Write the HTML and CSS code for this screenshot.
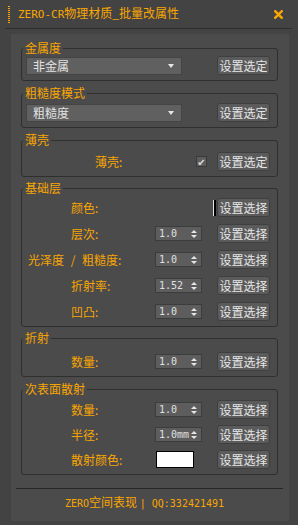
FILE: index.html
```html
<!DOCTYPE html>
<html lang="zh-CN">
<head>
    <meta charset="UTF-8">
    <meta name="viewport" content="width=device-width, initial-scale=1.0">
    <title>ZERO-CR物理材质_批量改属性</title>
    <link rel="stylesheet" href="styles.css">
</head>
<body>
    <div class="titlebar">
        <span class="grip"></span>
        <span class="title"><span class="latin">ZERO-CR</span>物理材质_批量改属性</span>
        <svg class="close" width="9" height="9" viewBox="0 0 9 9">
            <path d="M1.2 1.2 L7.8 7.8 M7.8 1.2 L1.2 7.8" stroke="#f9a602" stroke-width="2.4" stroke-linecap="square"/>
        </svg>
    </div>

    <div class="panel">
        <fieldset class="group g-metal">
            <legend>金属度</legend>
            <div class="select-row">
                <div class="dropdown">非金属<span class="caret"></span></div>
                <button class="btn">设置选定</button>
            </div>
        </fieldset>

        <fieldset class="group g-rough">
            <legend>粗糙度模式</legend>
            <div class="select-row">
                <div class="dropdown">粗糙度<span class="caret"></span></div>
                <button class="btn">设置选定</button>
            </div>
        </fieldset>

        <fieldset class="group g-thin">
            <legend>薄壳</legend>
            <div class="row">
                <span class="label label-thin">薄壳:</span>
                <span class="checkbox">✔</span>
                <button class="btn">设置选定</button>
            </div>
        </fieldset>

        <fieldset class="group g-base">
            <legend>基础层</legend>
            <div class="row row-first">
                <span class="label">颜色:</span>
                <span class="swatch-thin"></span>
                <button class="btn">设置选择</button>
            </div>
            <div class="row">
                <span class="label">层次:</span>
                <span class="spinner">1.0<span class="arrows"></span></span>
                <button class="btn">设置选择</button>
            </div>
            <div class="row">
                <span class="label label-long">光泽度 / 粗糙度:</span>
                <span class="spinner">1.0<span class="arrows"></span></span>
                <button class="btn">设置选择</button>
            </div>
            <div class="row">
                <span class="label">折射率:</span>
                <span class="spinner">1.52<span class="arrows"></span></span>
                <button class="btn">设置选择</button>
            </div>
            <div class="row">
                <span class="label">凹凸:</span>
                <span class="spinner">1.0<span class="arrows"></span></span>
                <button class="btn">设置选择</button>
            </div>
        </fieldset>

        <fieldset class="group g-refr">
            <legend>折射</legend>
            <div class="row">
                <span class="label">数量:</span>
                <span class="spinner">1.0<span class="arrows"></span></span>
                <button class="btn">设置选择</button>
            </div>
        </fieldset>

        <fieldset class="group g-sss">
            <legend>次表面散射</legend>
            <div class="row">
                <span class="label">数量:</span>
                <span class="spinner">1.0<span class="arrows"></span></span>
                <button class="btn">设置选择</button>
            </div>
            <div class="row">
                <span class="label">半径:</span>
                <span class="spinner">1.0mm<span class="arrows"></span></span>
                <button class="btn">设置选择</button>
            </div>
            <div class="row">
                <span class="label">散射颜色:</span>
                <span class="swatch"></span>
                <button class="btn">设置选择</button>
            </div>
        </fieldset>

        <div class="rule"></div>
        <div class="footer"><span class="latin">ZERO</span>空间表现 <span class="latin">| QQ:332421491</span></div>
    </div>
</body>
</html>
```

FILE: styles.css
```css
body {
    margin: 0;
    width: 298px;
    height: 525px;
    overflow: hidden;
    background-color: #434343;
    font-family: "Noto Sans CJK SC", "DejaVu Sans", sans-serif;
    font-size: 12px;
    color: #e2e2e2;
}
.titlebar {
    display: flex;
    align-items: center;
    height: 28px;
    margin: 0 6px 0 5px;
    border-bottom: 1px solid #2e2e2e;
}
.grip {
    width: 2px;
    height: 17px;
    margin: 0 8px 0 3px;
    background: repeating-linear-gradient(to bottom, #f9a602 0, #f9a602 1px, transparent 1px, transparent 2px);
}
.title {
    flex: 1;
    color: #f9a602;
    font-size: 12px;
    line-height: 14px;
}
.latin {
    font-family: "DejaVu Sans Mono", monospace;
    font-size: 11px;
}
.close {
    margin-right: 9px;
}
.panel {
    margin: 5px 9px 0 11px;
    padding-top: 7px;
    height: 480px;
    background-color: #4b4b4b;
}
.group {
    margin: 0 11px 5px 10px;
    padding: 4px 7px 5px 4px;
    border: 1px solid #2f2f2f;
    border-radius: 3px;
    min-width: 0;
}
.group legend {
    margin-left: -3px;
    padding: 0 2px;
    color: #f9a602;
    font-size: 12px;
    line-height: 14px;
}
.g-metal {
    padding-top: 1px;
}
.g-rough {
    padding-top: 3px;
}
.g-thin {
    padding-top: 5px;
    margin-bottom: 4px;
}
.g-base {
    padding-top: 3px;
    margin-bottom: 4px;
}
.g-refr {
    padding-top: 7px;
}
.select-row {
    display: flex;
    justify-content: space-between;
    align-items: center;
    height: 19px;
}
.dropdown {
    box-sizing: border-box;
    width: 156px;
    height: 18px;
    display: flex;
    align-items: center;
    justify-content: space-between;
    padding: 0 7px 0 6px;
    background-color: #606060;
    border: 1px solid #444;
    line-height: 16px;
}
.caret {
    width: 0;
    height: 0;
    border-left: 3px solid transparent;
    border-right: 3px solid transparent;
    border-top: 4px solid #e6e6e6;
}
.btn {
    box-sizing: border-box;
    width: 53px;
    height: 19px;
    padding: 0;
    background-color: #5b5b5b;
    border: 1px solid #3f3f3f;
    border-radius: 3px;
    color: #e6e6e6;
    font-family: "Noto Sans CJK SC", sans-serif;
    font-size: 12px;
    line-height: 16px;
}
.row {
    display: grid;
    grid-template-columns: 1fr 62px 53px;
    align-items: center;
    height: 19px;
    margin-top: 7px;
}
.row:first-of-type {
    margin-top: 0;
}
.g-base .row-first {
    margin-bottom: 3px;
}
.g-sss .row {
    margin-top: 6px;
}
.g-sss .row:first-of-type {
    margin-top: 0;
}
.label {
    padding-left: 45px;
    color: #f9a602;
    white-space: nowrap;
    line-height: 14px;
}
.label-long {
    padding-left: 2px;
    word-spacing: 4px;
}
.label-thin {
    padding-left: 69px;
}
.spinner {
    box-sizing: border-box;
    width: 47px;
    height: 15px;
    display: flex;
    align-items: center;
    justify-content: space-between;
    padding: 0 4px 0 3px;
    background-color: #5d5d5d;
    border: 1px solid #3c3c3c;
    font-family: "DejaVu Sans Mono", monospace;
    font-size: 10px;
    color: #e0e0e0;
}
.arrows {
    display: flex;
    flex-direction: column;
    gap: 2px;
}
.arrows::before,
.arrows::after {
    content: "";
    width: 0;
    height: 0;
    border-left: 3px solid transparent;
    border-right: 3px solid transparent;
}
.arrows::before {
    border-bottom: 3px solid #e6e6e6;
}
.arrows::after {
    border-top: 3px solid #e6e6e6;
}
.checkbox {
    justify-self: end;
    box-sizing: border-box;
    width: 11px;
    height: 11px;
    margin-right: 10px;
    background-color: #5d5d5d;
    border: 1px solid #3a3a3a;
    color: #dcdcdc;
    font-size: 10px;
    line-height: 9px;
    text-align: center;
}
.swatch-thin {
    justify-self: end;
    width: 0;
    height: 16px;
    margin-right: 1px;
    border-left: 1px solid #e6e6e6;
    border-right: 2px solid #000;
}
.swatch {
    box-sizing: border-box;
    width: 38px;
    height: 17px;
    margin-left: 1px;
    background-color: #fff;
    border: 1px solid #000;
}
.rule {
    margin: 13px 6px 0 5px;
    border-top: 1px solid #262626;
}
.footer {
    padding: 6px 11px 0 0;
    text-align: center;
    color: #f9a602;
    line-height: 14px;
}
.footer .latin {
    font-size: 10px;
}
```
